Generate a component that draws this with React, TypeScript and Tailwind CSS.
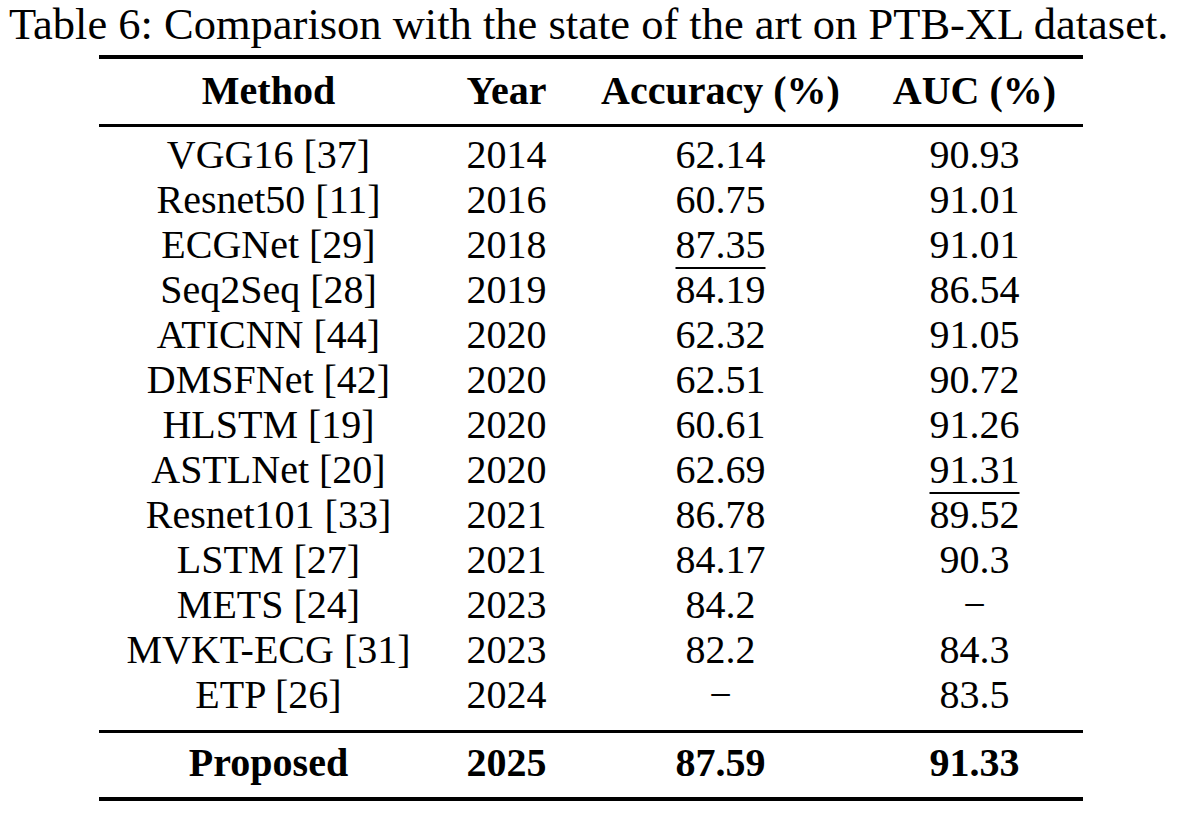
const rows: [string, string, string, string][] = [
  ['VGG16 [37]', '2014', '62.14', '90.93'],
  ['Resnet50 [11]', '2016', '60.75', '91.01'],
  ['ECGNet [29]', '2018', '87.35', '91.01'],
  ['Seq2Seq [28]', '2019', '84.19', '86.54'],
  ['ATICNN [44]', '2020', '62.32', '91.05'],
  ['DMSFNet [42]', '2020', '62.51', '90.72'],
  ['HLSTM [19]', '2020', '60.61', '91.26'],
  ['ASTLNet [20]', '2020', '62.69', '91.31'],
  ['Resnet101 [33]', '2021', '86.78', '89.52'],
  ['LSTM [27]', '2021', '84.17', '90.3'],
  ['METS [24]', '2023', '84.2', '−'],
  ['MVKT-ECG [31]', '2023', '82.2', '84.3'],
  ['ETP [26]', '2024', '−', '83.5'],
];

// second-best values are underlined
const underlined = new Set(['87.35', '91.31']);

function Cell({ value }: { value: string }) {
  return (
    <div className="text-center">
      {underlined.has(value) ? (
        <span className="underline decoration-2 underline-offset-[9px]">{value}</span>
      ) : (
        value
      )}
    </div>
  );
}

export default function App() {
  return (
    <div className="w-[1200px] h-[828px] bg-white text-black font-['Liberation_Serif',serif]">
      <p className="pl-[9px] text-[44.5px] leading-[49px] whitespace-nowrap">
        Table 6: Comparison with the state of the art on PTB-XL dataset.
      </p>

      <div className="ml-[99px] mt-[6px] w-[984px] text-[40px] leading-[45px]">
        <div className="h-[4px] bg-black" />

        <div className="grid grid-cols-[339px_137px_291px_217px] pt-[9px] pb-[11px] font-bold text-center">
          <div>Method</div>
          <div>Year</div>
          <div>Accuracy (%)</div>
          <div>AUC (%)</div>
        </div>

        <div className="h-[3px] bg-black" />

        <div className="pt-[5px] pb-[13px]">
          {rows.map((r) => (
            <div key={r[0]} className="grid grid-cols-[339px_137px_291px_217px]">
              <Cell value={r[0]} />
              <Cell value={r[1]} />
              <Cell value={r[2]} />
              <Cell value={r[3]} />
            </div>
          ))}
        </div>

        <div className="h-[3px] bg-black" />

        <div className="grid grid-cols-[339px_137px_291px_217px] pt-[7px] pb-[12px] font-bold text-center">
          <div>Proposed</div>
          <div>2025</div>
          <div>87.59</div>
          <div>91.33</div>
        </div>

        <div className="h-[4px] bg-black" />
      </div>
    </div>
  );
}
